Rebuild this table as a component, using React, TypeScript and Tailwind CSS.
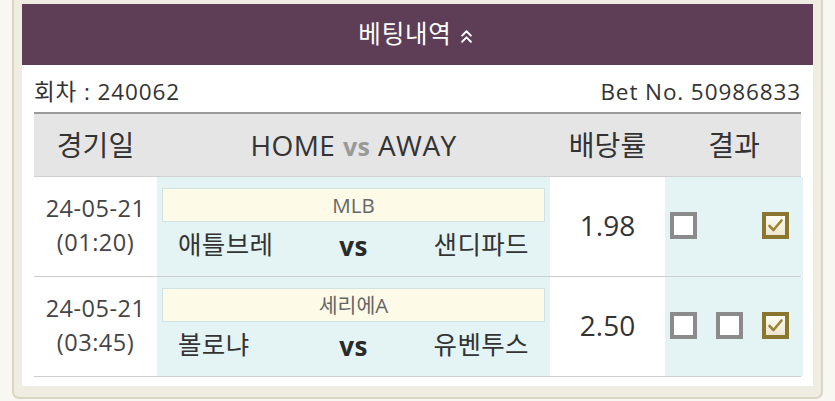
import { ChevronsUp } from 'lucide-react';

type Pick = 'none' | 'off' | 'on';

const rows: {
  date: string;
  time: string;
  league: string;
  home: string;
  away: string;
  odds: string;
  picks: Pick[];
}[] = [
  { date: '24-05-21', time: '(01:20)', league: 'MLB', home: '애틀브레', away: '샌디파드', odds: '1.98', picks: ['off', 'none', 'on'] },
  { date: '24-05-21', time: '(03:45)', league: '세리에A', home: '볼로냐', away: '유벤투스', odds: '2.50', picks: ['off', 'off', 'on'] },
];

function Box({ state }: { state: Pick }) {
  if (state === 'none') return <div className="w-[27px] h-[27px]" />;
  if (state === 'off')
    return <div className="w-[27px] h-[27px] border-[4px] border-[#8b8b8b] bg-white" />;
  return (
    <div className="w-[27px] h-[27px] border-[4px] border-[#8a7630] bg-gradient-to-b from-[#fffdf4] to-[#ece6cf] flex items-center justify-center">
      <svg width="17" height="15" viewBox="0 0 17 15">
        <path d="M2.5 8 L6.5 12 L14.5 2.5" fill="none" stroke="#9a8438" strokeWidth="2.6" strokeLinecap="round" strokeLinejoin="round" />
      </svg>
    </div>
  );
}

export default function App() {
  return (
    <div className="w-[835px] h-[401px] bg-[#f8f7f2] px-3 overflow-hidden" style={{ fontFamily: '"Open Sans", "Noto Sans CJK KR", sans-serif' }}>
      <div className="bg-[#efece1] border-x-2 border-b-2 border-[#dad5c4] rounded-b-[7px] px-[8px] pt-1 pb-[11px]">
        <div className="h-[61px] bg-[#5d3e56] flex items-center justify-center gap-[4px] text-white text-[24.5px] tracking-[0.8px]">
          <span>베팅내역</span>
          <ChevronsUp size={21} strokeWidth={2.2} className="mt-[3px]" />
        </div>
        <div className="bg-white px-3 pb-[9px]">
          <div className="h-[47px] flex items-end justify-between pb-[3px] text-[22.5px] text-[#333] tracking-[0.9px]">
            <span>회차 : 240062</span>
            <span>Bet No. 50986833</span>
          </div>
          <div className="grid grid-cols-[123px_393px_115px_138px] h-[65px] bg-[#e5e5e5] border-t-2 border-[#9a9a9a] border-b border-b-[#cfcfcf] items-center text-[28px] text-[#333]">
            <div className="text-center">경기일</div>
            <div className="text-center tracking-[0.4px]">HOME <span className="text-[#999] font-bold text-[25px]">vs</span> AWAY</div>
            <div className="text-center">배당률</div>
            <div className="text-center">결과</div>
          </div>
          {rows.map((r) => (
            <div key={r.league} className="grid grid-cols-[123px_393px_115px_138px] h-[100px] border-b border-[#cdcdcd]">
              <div className="flex flex-col items-center justify-center text-[23.5px] leading-[34px] text-[#444] tracking-[0.5px] pb-[3px]">
                <div>{r.date}</div>
                <div>{r.time}</div>
              </div>
              <div className="bg-[#e4f3f3] px-[5px] pt-[11px]">
                <div className="h-[34px] bg-[#fdfbe8] border border-[#cfe4e2] flex items-center justify-center text-[20.5px] text-[#666]">{r.league}</div>
                <div className="flex items-center justify-between px-[16px] h-[44px] text-[25.5px] text-[#333] tracking-[0.4px]">
                  <span className="w-[120px]">{r.home}</span>
                  <span className="font-bold text-[26px] mt-[5px] text-[#2a2a2a]">vs</span>
                  <span className="w-[120px] text-right">{r.away}</span>
                </div>
              </div>
              <div className="flex items-center justify-center text-[28px] text-[#333] pb-[4px]">{r.odds}</div>
              <div className="bg-[#e4f3f3] flex items-center justify-between pl-[5px] pr-[14px] pb-[3px]">
                {r.picks.map((p, i) => (
                  <Box key={i} state={p} />
                ))}
              </div>
            </div>
          ))}
        </div>
      </div>
    </div>
  );
}
